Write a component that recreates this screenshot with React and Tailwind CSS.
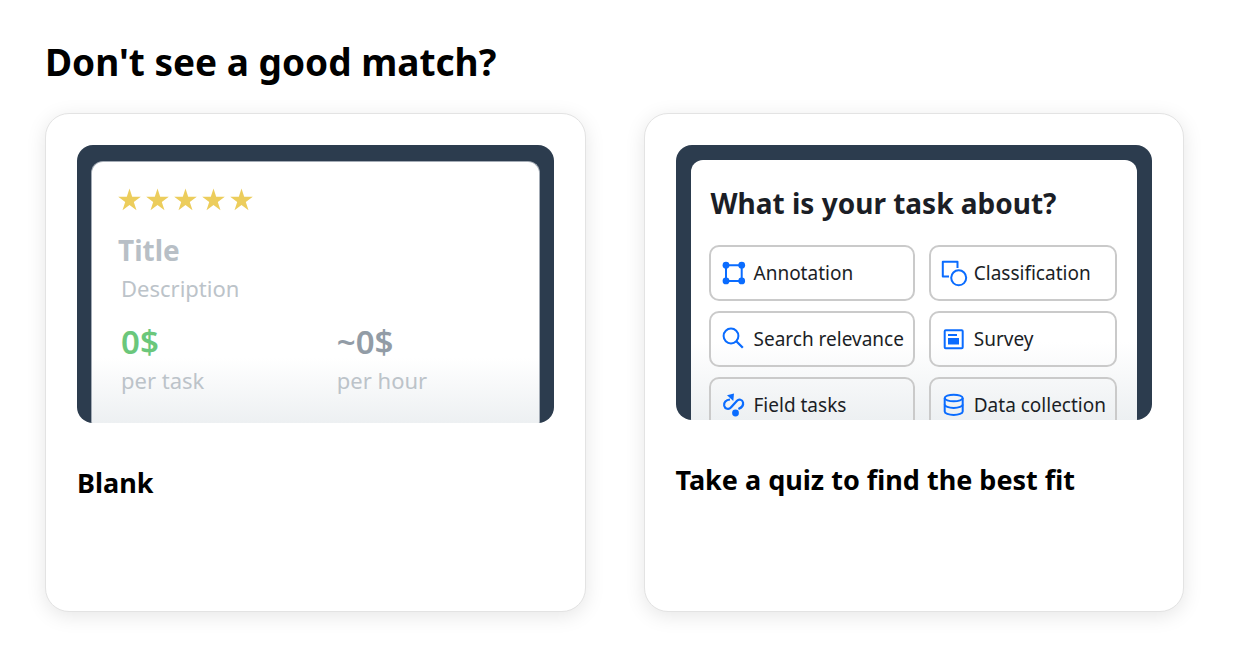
const font = "font-['Noto_Sans',sans-serif]";

function Star() {
  return (
    <svg viewBox="0 0 24 24" className="h-6 w-6 fill-[#eccd5c]" aria-hidden="true">
      <path d="M11.500 .500l2.700 8.300h8.600l-7 5.100 2.700 8.400-7-5.200-7 5.200 2.700-8.400-7-5.100h8.600z" />
    </svg>
  );
}

function Icon({ children }) {
  return (
    <svg
      viewBox="0 0 24 24"
      className="h-6 w-6 shrink-0 overflow-visible"
      fill="none"
      stroke="#0a6cff"
      strokeWidth="2"
      aria-hidden="true"
    >
      {children}
    </svg>
  );
}

const icons = {
  annotation: (
    <Icon>
      <path d="M4 4.200h15.700v15.700H4z" />
      <g fill="#0a6cff" stroke="none">
        <circle cx="4" cy="4.200" r="3.400" />
        <circle cx="19.700" cy="4.200" r="3.400" />
        <circle cx="4" cy="19.900" r="3.400" />
        <circle cx="19.700" cy="19.900" r="3.400" />
      </g>
    </Icon>
  ),
  classification: (
    <Icon>
      <path d="M7 15.500H.800V.800H15.500V7" strokeLinejoin="round" />
      <circle cx="16.700" cy="16.800" r="7.500" />
    </Icon>
  ),
  search: (
    <Icon>
      <circle cx="9" cy="9" r="7.400" />
      <path d="M14.300 14.300l6.500 6.500" strokeWidth="2.300" />
    </Icon>
  ),
  survey: (
    <Icon>
      <rect x="2.700" y="3.300" width="18" height="18" rx="1" />
      <path d="M6 8h9" />
      <path d="M6 11h11v6.500H6z" fill="#0a6cff" stroke="none" />
    </Icon>
  ),
  field: (
    <Icon>
      <path
        d="M8 6.500C4 7 1.500 9.500 2.200 12.700c.800 3.300 4.600 4.300 6.900 1.600l5.700-6.400c2-2.200 5.600-1.400 6.200 1.500.700 3.200-1.200 5.200-4.600 6.700"
        strokeWidth="2.200"
      />
      <path d="M5 2.200L12 0.500l-.700 7.500z" fill="#0a6cff" stroke="none" />
      <circle cx="13.500" cy="20" r="3.400" fill="#0a6cff" stroke="none" />
    </Icon>
  ),
  data: (
    <Icon>
      <ellipse cx="11.700" cy="5" rx="9" ry="3.300" />
      <path d="M2.700 5v13.500c0 1.900 4 3.400 9 3.400s9-1.500 9-3.400V5" />
      <path d="M2.700 11.500c0 1.900 4 3.400 9 3.400s9-1.500 9-3.400" />
    </Icon>
  ),
};

const options = [
  ["Annotation", "annotation"],
  ["Classification", "classification"],
  ["Search relevance", "search"],
  ["Survey", "survey"],
  ["Field tasks", "field"],
  ["Data collection", "data"],
];

function Card({ title, children }) {
  return (
    <article className="flex min-h-[499px] min-w-0 flex-1 flex-col rounded-3xl border border-[#e3e3e3] bg-white p-[31px] shadow-[0_4px_20px_rgba(0,0,0,0.1)]">
      {children}
      <h2 className="mt-10 text-[27px] leading-10 font-bold text-black">
        <a href="#">{title}</a>
      </h2>
    </article>
  );
}

function BlankPreview() {
  return (
    <div className="h-[278px] overflow-hidden rounded-2xl bg-[#2c3c4e] px-[14px] pt-4">
      <div className="h-full rounded-t-xl border border-b-0 border-[#a3abb5] bg-linear-to-b from-white from-75% to-[#edf0f2] px-[26px] pt-[26px]">
        <div className="flex gap-1" role="img" aria-label="5 stars">
          <Star />
          <Star />
          <Star />
          <Star />
          <Star />
        </div>
        <p className="mt-[18px] text-[28px] leading-10 font-bold text-[#b8bfc6]">Title</p>
        <p className="px-[3px] text-[22px] leading-9 text-[#bcc3c9]">Description</p>
        <dl className="grid grid-cols-[5fr_4fr] px-[3px] pt-4 text-[#bcc3c9]">
          <div className="flex flex-col-reverse">
            <dt className="text-[22px] leading-9">per task</dt>
            <dd className="text-[33px] leading-10 font-semibold text-[#6bc77b]">0$</dd>
          </div>
          <div className="flex flex-col-reverse">
            <dt className="text-[22px] leading-9">per hour</dt>
            <dd className="text-[33px] leading-10 font-semibold text-[#929ca6]">~0$</dd>
          </div>
        </dl>
      </div>
    </div>
  );
}

function QuizPreview() {
  return (
    <div className="h-[275px] overflow-hidden rounded-2xl bg-[#2c3c4e] px-[15px] pt-[15px]">
      <div className="h-full rounded-t-xl bg-linear-to-b from-white from-70% to-[#edf0f2] pt-[23px] pr-5 pl-[18px]">
        <p className="px-[2px] text-[28px] leading-10 font-bold text-[#1b1e26]">
          What is your task about?
        </p>
        <div className="mt-[22px] grid grid-cols-[206fr_188fr] gap-x-[14px] gap-y-[10px]">
          {options.map(([label, icon]) => (
            <button
              key={label}
              type="button"
              className="flex h-14 items-center gap-2 rounded-[10px] border-2 border-[#cacaca] pr-2 pl-[11px] text-left text-[19px] whitespace-nowrap text-[#1b1e26]"
            >
              {icons[icon]}
              {label}
            </button>
          ))}
        </div>
      </div>
    </div>
  );
}

export default function App() {
  return (
    <main className={`${font} bg-white pt-9 pr-[66px] pb-10 pl-[45px]`}>
      <h1 className="text-[37px] leading-[52px] font-bold text-black">Don't see a good match?</h1>
      <div className="mt-[25px] flex gap-[58px]">
        <Card title="Blank">
          <BlankPreview />
        </Card>
        <Card title="Take a quiz to find the best fit">
          <QuizPreview />
        </Card>
      </div>
    </main>
  );
}
